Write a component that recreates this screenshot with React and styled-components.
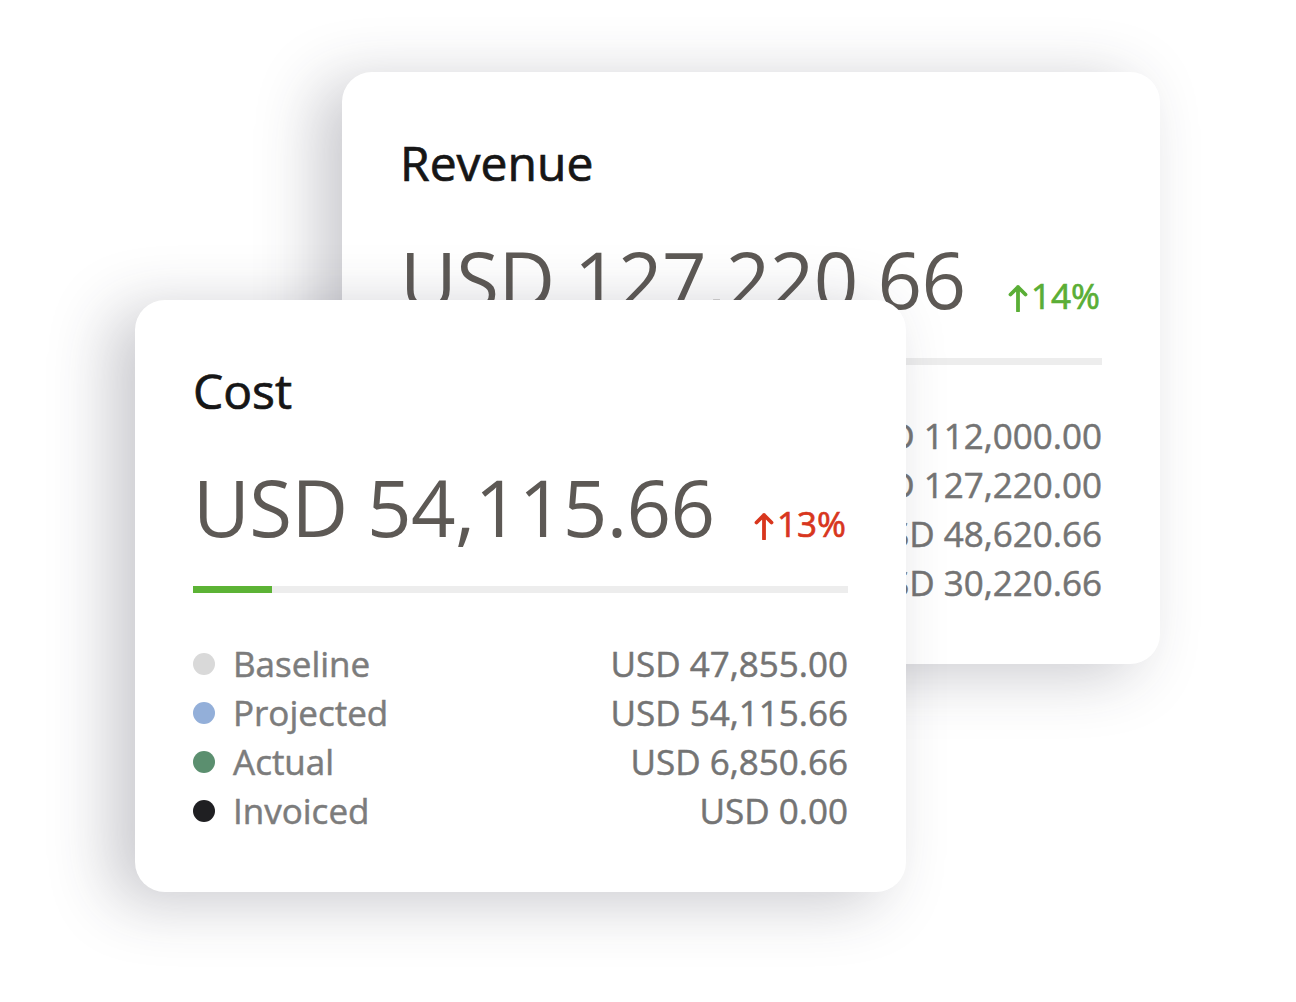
import React from "react";
import styled, { createGlobalStyle } from "styled-components";

const GlobalStyle = createGlobalStyle`
  html, body {
    margin: 0;
    padding: 0;
    background: #ffffff;
  }
  body {
    font-family: "Open Sans", "Noto Sans", "Liberation Sans", sans-serif;
  }
`;

const Stage = styled.div`
  width: 1296px;
  height: 1002px;
  display: grid;
  overflow: hidden;
`;

const Card = styled.div`
  grid-area: 1 / 1;
  align-self: start;
  justify-self: start;
  margin-left: ${(p) => p.$left}px;
  margin-top: ${(p) => p.$top}px;
  width: ${(p) => p.$width}px;
  box-sizing: border-box;
  padding: 67px 58px 57px 58px;
  background: #ffffff;
  border-radius: 30px;
  box-shadow: -24px 10px 62px rgba(45, 45, 65, 0.26);
`;

const Title = styled.div`
  font-size: 48px;
  line-height: 1;
  font-weight: 500;
  color: #161616;
  -webkit-text-stroke: 0.7px #161616;
`;

const Headline = styled.div`
  display: flex;
  align-items: baseline;
  justify-content: space-between;
  margin-top: 53px;
`;

const Amount = styled.div`
  font-size: 78px;
  line-height: 1;
  font-weight: 400;
  letter-spacing: -0.6px;
  color: #5d5955;
  white-space: nowrap;
`;

const Change = styled.div`
  display: flex;
  align-items: baseline;
  gap: 3px;
  font-size: 35px;
  line-height: 1;
  color: ${(p) => p.$color};
  -webkit-text-stroke: 0.7px ${(p) => p.$color};
  white-space: nowrap;
  margin-right: 2px;
`;

const Track = styled.div`
  margin-top: 40px;
  height: 7px;
  background: #ededed;
  display: flex;
`;

const Fill = styled.div`
  height: 100%;
  background: #5cb335;
`;

const Legend = styled.div`
  margin-top: 46px;
  display: flex;
  flex-direction: column;
`;

const Row = styled.div`
  display: flex;
  align-items: center;
  height: 49px;
  font-size: 35px;
  line-height: 49px;
  -webkit-text-stroke: 0.5px currentColor;
`;

const Dot = styled.span`
  width: 22px;
  height: 22px;
  border-radius: 50%;
  background: ${(p) => p.$color};
  margin-right: 18px;
  flex: none;
`;

const Label = styled.span`
  color: #7c7c7c;
`;

const Value = styled.span`
  margin-left: auto;
  color: #747474;
`;

const UpArrow = ({ color }) => (
  <svg width="20" height="28" viewBox="0 0 20 28" style={{ alignSelf: "flex-end", marginBottom: 1 }}>
    <path d="M10 27V3M2.5 10.5L10 3l7.5 7.5" fill="none" stroke={color} strokeWidth="3.8" strokeLinecap="round" strokeLinejoin="round" />
  </svg>
);

const cards = [
  {
    key: "revenue",
    title: "Revenue",
    amount: "USD 127,220.66",
    change: "14%",
    changeColor: "#5aae36",
    fill: 18,
    left: 342,
    top: 72,
    width: 818,
    rows: [
      ["Baseline", "#d9d9d9", "USD 112,000.00"],
      ["Projected", "#93afd9", "USD 127,220.00"],
      ["Actual", "#5b8f6f", "USD 48,620.66"],
      ["Invoiced", "#1f1f22", "USD 30,220.66"],
    ],
  },
  {
    key: "cost",
    title: "Cost",
    amount: "USD 54,115.66",
    change: "13%",
    changeColor: "#d8361d",
    fill: 12,
    left: 135,
    top: 300,
    width: 771,
    rows: [
      ["Baseline", "#d9d9d9", "USD 47,855.00"],
      ["Projected", "#93afd9", "USD 54,115.66"],
      ["Actual", "#5b8f6f", "USD 6,850.66"],
      ["Invoiced", "#1f1f22", "USD 0.00"],
    ],
  },
];

const SummaryCard = ({ card }) => (
  <Card $left={card.left} $top={card.top} $width={card.width}>
    <Title>{card.title}</Title>
    <Headline>
      <Amount>{card.amount}</Amount>
      <Change $color={card.changeColor}>
        <UpArrow color={card.changeColor} />
        {card.change}
      </Change>
    </Headline>
    <Track>
      <Fill style={{ width: `${card.fill}%` }} />
    </Track>
    <Legend>
      {card.rows.map(([label, color, value]) => (
        <Row key={label}>
          <Dot $color={color} />
          <Label>{label}</Label>
          <Value>{value}</Value>
        </Row>
      ))}
    </Legend>
  </Card>
);

export default function App() {
  return (
    <>
      <GlobalStyle />
      <Stage>
        {cards.map((card) => (
          <SummaryCard key={card.key} card={card} />
        ))}
      </Stage>
    </>
  );
}
